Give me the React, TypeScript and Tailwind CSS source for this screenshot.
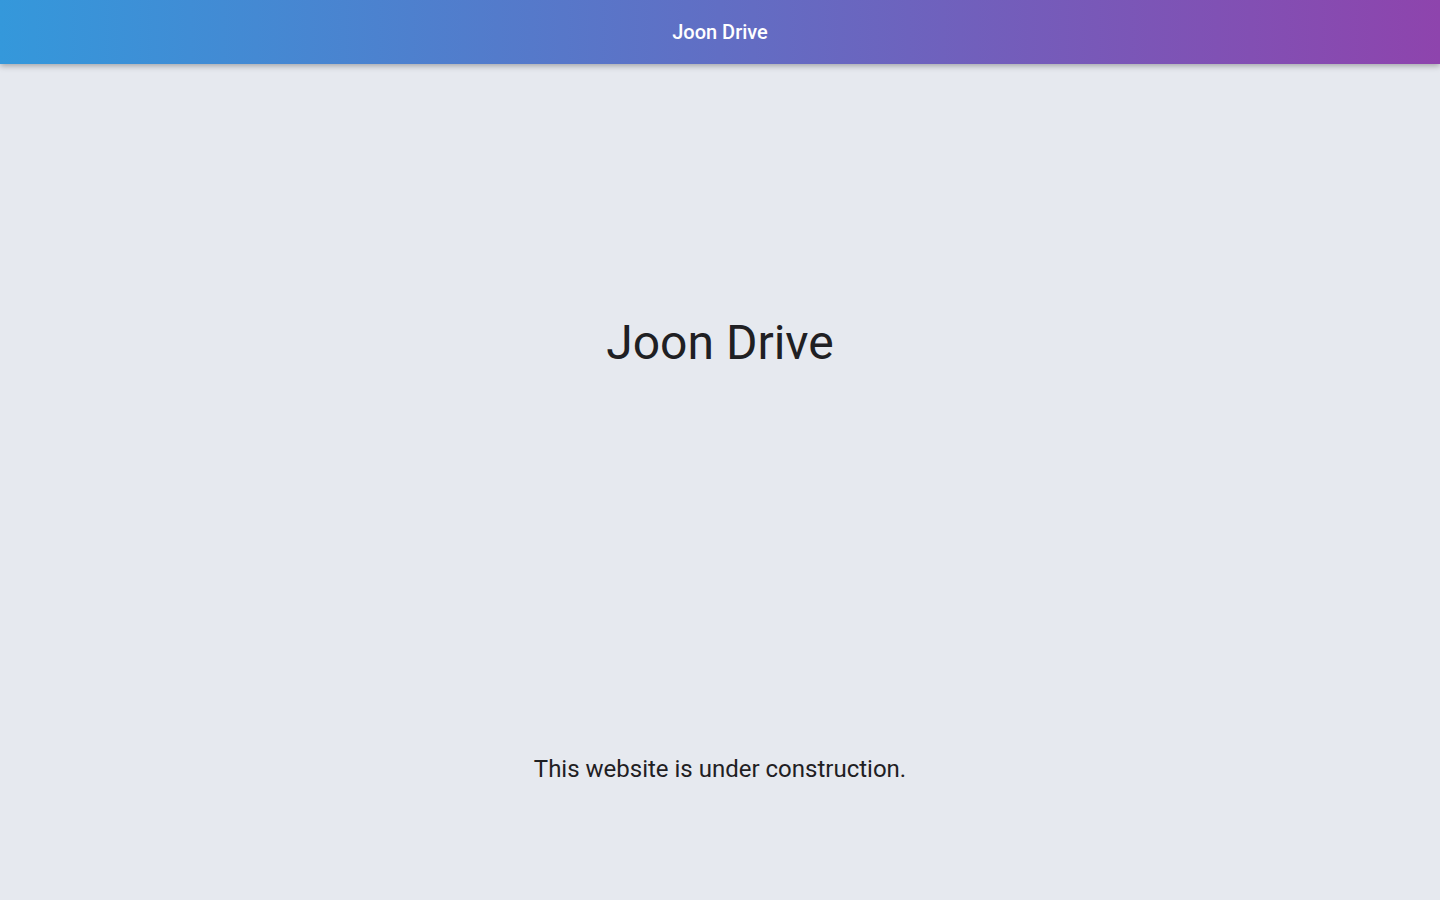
export default function App() {
  return (
    <div className="min-h-screen bg-[#e6e9ef] font-['Roboto',sans-serif] text-[#1f2023]">
      <header className="h-16 flex items-center justify-center bg-[linear-gradient(to_right,#3498db,#8e44ad)] shadow-[0_2px_6px_rgba(0,0,0,0.3)] relative z-10">
        <span className="text-white text-xl font-medium">Joon Drive</span>
      </header>

      <main className="flex flex-col items-center pt-[255px]">
        <h1 className="text-5xl leading-[48px] font-normal">Joon Drive</h1>
        <p className="mt-[386px] text-2xl">This website is under construction.</p>
      </main>
    </div>
  );
}
